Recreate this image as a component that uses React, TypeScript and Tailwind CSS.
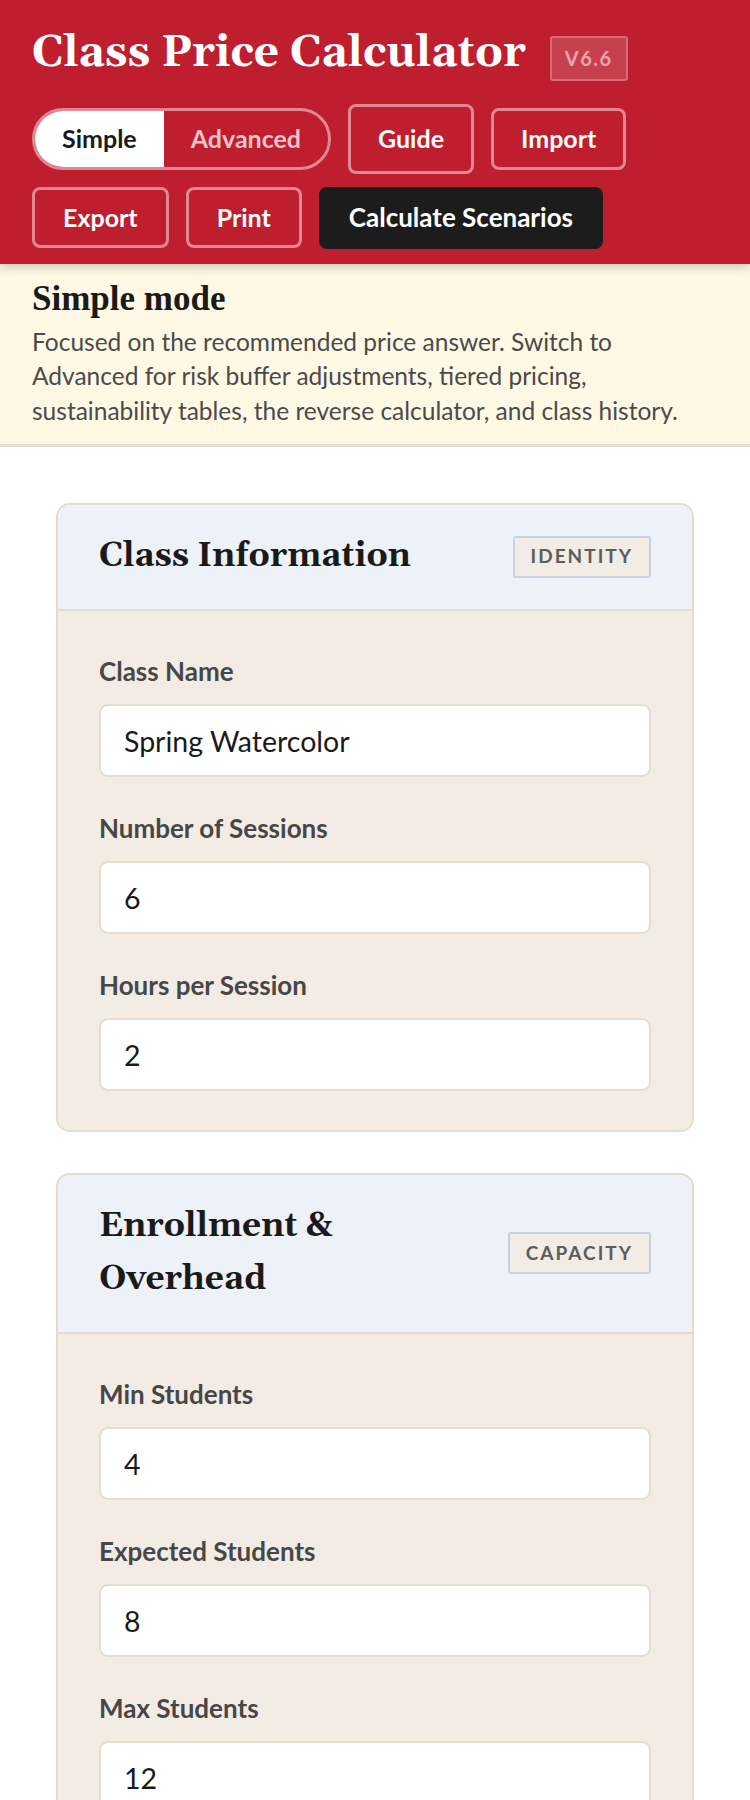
import React, { useState } from "react";

const sans = "font-['Lato','Liberation_Sans',sans-serif]";
const serif = "font-['Gelasio','Georgia',serif]";

interface FieldProps {
  label: string;
  value: string;
}

const Field: React.FC<FieldProps> = ({ label, value }) => (
  <div className="flex flex-col">
    <label className="text-[26px] leading-[36px] font-bold text-[#474747] mb-[15px]">
      {label}
    </label>
    <input
      defaultValue={value}
      className="h-[73px] w-full bg-white border-2 border-[#e6ddcd] rounded-[9px] px-[23px] text-[28.5px] text-[#1a1a1a] outline-none"
    />
  </div>
);

interface CardProps {
  title: string;
  badge: string;
  children: React.ReactNode;
}

const Card: React.FC<CardProps> = ({ title, badge, children }) => (
  <section className="border-2 border-[#e4dbcc] rounded-[14px] overflow-hidden">
    <div className="bg-[#edf1f8] border-b-2 border-[#e4dbcc] px-[41px] pt-[25px] pb-[26px] flex items-center justify-between gap-6">
      <h2 className={`${serif} text-[33.5px] leading-[53px] font-bold text-[#1a1a1a] max-w-[340px]`}>
        {title}
      </h2>
      <span className="shrink-0 border-2 border-[#c6d1e4] bg-[#f3ece4] rounded-[3px] px-[16px] h-[42px] flex items-center text-[19px] font-bold tracking-[2px] text-[#5c5c5c]">
        {badge}
      </span>
    </div>
    <div className="bg-[#f3ece4] px-[41px] pt-[42px] pb-[39px] flex flex-col gap-[33px]">
      {children}
    </div>
  </section>
);

export default function App() {
  const [mode, setMode] = useState<"simple" | "advanced">("simple");

  const outlineBtn =
    "rounded-[8px] border-[3px] border-[#e08890] text-white text-[25px] font-bold";

  return (
    <div className={`${sans} min-h-screen bg-white`}>
      {/* Header */}
      <header className="bg-[#be1e2d] px-8 pt-[27px] pb-[15px] shadow-[0_4px_10px_rgba(0,0,0,0.18)] relative z-10">
        <div className="flex items-baseline gap-[24px]">
          <h1 className={`${serif} text-[44px] leading-[53px] font-bold text-white`}>
            Class Price Calculator
          </h1>
          <span className="h-[45px] px-[13px] flex items-center rounded-[3px] border-2 border-[#d96b75] bg-[#c7404d] text-[#eba6ad] text-[20px] font-bold tracking-[1.5px]">
            V6.6
          </span>
        </div>

        <div className="mt-[23px] flex flex-wrap items-center gap-x-[17px] gap-y-[13px]">
          <div className="flex h-[62px] rounded-full border-[3px] border-[#e08890] overflow-hidden">
            <button
              onClick={() => setMode("simple")}
              className={`px-[27px] text-[25px] font-bold ${
                mode === "simple" ? "bg-white text-[#1a1a1a]" : "text-[#f2c3c8]"
              }`}
            >
              Simple
            </button>
            <button
              onClick={() => setMode("advanced")}
              className={`px-[27px] text-[25px] font-bold ${
                mode === "advanced" ? "bg-white text-[#1a1a1a]" : "text-[#f2c3c8]"
              }`}
            >
              Advanced
            </button>
          </div>
          <button className={`${outlineBtn} px-[27px] h-[70px]`}>Guide</button>
          <button className={`${outlineBtn} px-[27px] h-[62px]`}>Import</button>
          <button className={`${outlineBtn} px-[28px] h-[61px]`}>Export</button>
          <button className={`${outlineBtn} px-[28px] h-[61px]`}>Print</button>
          <button className="h-[62px] px-[30px] rounded-[8px] bg-[#1c1c1c] text-white text-[26px] font-bold">
            Calculate Scenarios
          </button>
        </div>
      </header>

      {/* Mode note */}
      <div className="bg-[#fef8e4] border-b-[3px] border-[#e4ded2] px-8 pt-[15px] pb-[16px]">
        <h3 className="font-['Liberation_Serif',serif] text-[35px] leading-[40px] font-bold text-[#1a1a1a] mb-[6px]">
          Simple mode
        </h3>
        <p className="text-[24.5px] leading-[34.5px] text-[#4a4a4a]">
          Focused on the recommended price answer. Switch to Advanced for risk
          buffer adjustments, tiered pricing, sustainability tables, the reverse
          calculator, and class history.
        </p>
      </div>

      {/* Cards */}
      <main className="px-[56px] pt-[56px] pb-10 flex flex-col gap-[41px]">
        <Card title="Class Information" badge="IDENTITY">
          <Field label="Class Name" value="Spring Watercolor" />
          <Field label="Number of Sessions" value="6" />
          <Field label="Hours per Session" value="2" />
        </Card>
        <Card title="Enrollment & Overhead" badge="CAPACITY">
          <Field label="Min Students" value="4" />
          <Field label="Expected Students" value="8" />
          <Field label="Max Students" value="12" />
        </Card>
      </main>
    </div>
  );
}
